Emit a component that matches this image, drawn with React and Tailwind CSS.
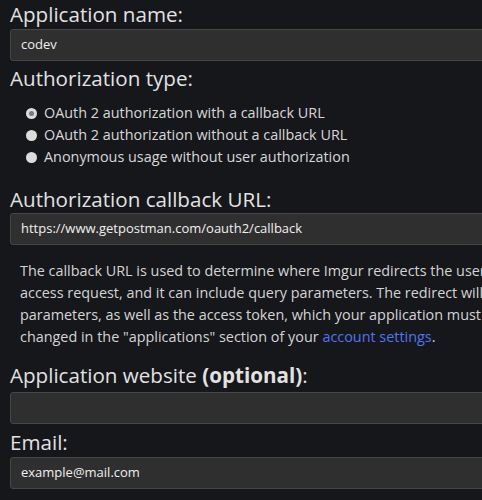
import React from "react";

function Radio({ checked, label }) {
  return (
    <label className="flex h-[22px] items-center">
      <span className="ml-[16px] flex h-[11px] w-[11px] items-center justify-center rounded-full bg-[#dcdcdc]">
        {checked && <span className="h-[5px] w-[5px] rounded-full bg-[#7a7a7a]" />}
      </span>
      <span className="ml-[7px] text-[14.4px] text-[#d8d8d8]">{label}</span>
    </label>
  );
}

function Field({ value }) {
  return (
    <div className="flex h-[32px] w-[640px] items-center rounded-[3px] border border-[#474747] bg-[#2f2f2f] pl-[10px] text-[13px] font-medium text-[#f0f0f0]">
      {value}
    </div>
  );
}

export default function App() {
  return (
    <div className="h-[500px] w-[482px] overflow-hidden bg-[#16171b] font-['Open_Sans',sans-serif]">
      <div className="w-[720px] pl-[10px] pt-[2px]">
        <h2 className="mb-[3px] text-[20.6px] leading-[24px] text-[#e2e2e2]">Application name:</h2>
        <Field value="codev" />
        <h2 className="mt-[5px] text-[20.6px] leading-[24px] text-[#e2e2e2]">Authorization type:</h2>
        <div className="pt-[12px]">
          <Radio checked label="OAuth 2 authorization with a callback URL" />
          <Radio label="OAuth 2 authorization without a callback URL" />
          <Radio label="Anonymous usage without user authorization" />
        </div>
        <h2 className="mb-[2px] mt-[19px] text-[20.6px] leading-[24px] text-[#e2e2e2]">Authorization callback URL:</h2>
        <Field value="https://www.getpostman.com/oauth2/callback" />
        <p className="mt-[15px] whitespace-nowrap pl-[10px] text-[14.4px] leading-[22px] text-[#d4d4d4]">
          The callback URL is used to determine where Imgur redirects the user after they approve or deny an
          <br />
          access request, and it can include query parameters. The redirect will include query
          <br />
          parameters, as well as the access token, which your application must collect. This can be
          <br />
          changed in the "applications" section of your <a className="text-[#5274f0]">account settings</a>.
        </p>
        <h2 className="mb-[5px] mt-[15px] text-[20.6px] leading-[24px] text-[#e2e2e2]">
          Application website <span className="font-bold">(optional)</span>:
        </h2>
        <Field value="" />
        <h2 className="mb-[3px] mt-[6px] text-[20.6px] leading-[24px] text-[#e2e2e2]">Email:</h2>
        <Field value="example@mail.com" />
      </div>
    </div>
  );
}
